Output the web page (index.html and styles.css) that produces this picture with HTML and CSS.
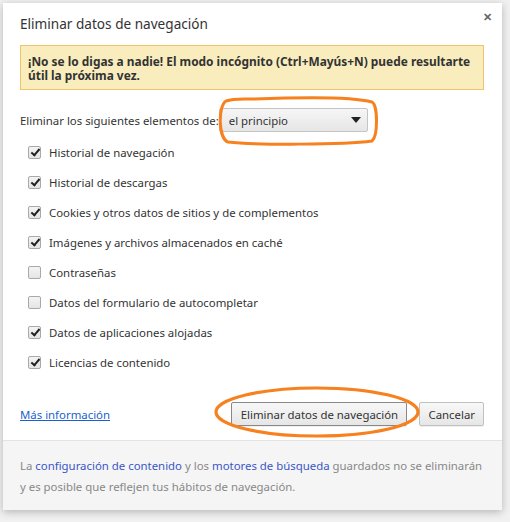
FILE: index.html
```html
<!DOCTYPE html>
<html lang="es">
<head>
<meta charset="utf-8">
<link rel="stylesheet" href="styles.css">
</head>
<body>
<div class="dialog">
  <div class="header">
    <h1 class="title">Eliminar datos de navegación</h1>
    <span class="close">✕</span>
  </div>
  <div class="content">
    <div class="banner">¡No se lo digas a nadie! El modo incógnito (Ctrl+Mayús+N) puede resultarte útil la próxima vez.</div>
    <div class="period-row">
      <span class="period-label">Eliminar los siguientes elementos de:</span>
      <div class="select">
        <span>el principio</span>
        <span class="arrow"></span>
      </div>
    </div>
    <ul class="items">
      <li class="item"><span class="cb on"></span>Historial de navegación</li>
      <li class="item"><span class="cb on"></span>Historial de descargas</li>
      <li class="item"><span class="cb on"></span>Cookies y otros datos de sitios y de complementos</li>
      <li class="item"><span class="cb on"></span>Imágenes y archivos almacenados en caché</li>
      <li class="item"><span class="cb"></span>Contraseñas</li>
      <li class="item"><span class="cb"></span>Datos del formulario de autocompletar</li>
      <li class="item"><span class="cb on"></span>Datos de aplicaciones alojadas</li>
      <li class="item"><span class="cb on"></span>Licencias de contenido</li>
    </ul>
    <div class="actions">
      <a class="more" href="#">Más información</a>
      <div class="buttons">
        <button class="btn primary">Eliminar datos de navegación</button>
        <button class="btn">Cancelar</button>
      </div>
    </div>
  </div>
  <div class="footer">
    <p class="note">La <a href="#">configuración de contenido</a> y los <a href="#">motores de búsqueda</a> guardados no se eliminarán y es posible que reflejen tus hábitos de navegación.</p>
  </div>
  <svg class="mark mark-select" width="166" height="50" viewBox="0 0 166 50">
    <path d="M40 3 C90 1 140 1 158 6 C164 9 164 40 158 45 C130 49 40 49 14 46 C4 42 4 10 12 5 C20 2 30 3 40 3 Z" fill="none" stroke="#f7811f" stroke-width="3"/>
  </svg>
  <svg class="mark mark-button" width="208" height="56" viewBox="0 0 208 56">
    <ellipse cx="104" cy="27" rx="101" ry="24" fill="none" stroke="#f7811f" stroke-width="3.2"/>
  </svg>
</div>
</body>
</html>
```

FILE: styles.css
```css
html, body {
  margin: 0;
  padding: 0;
}
body {
  background: #f1f1f1;
  font-family: "Noto Sans", "Open Sans", sans-serif;
  font-size: 11.4px;
  color: #333;
  width: 510px;
  height: 522px;
  overflow: hidden;
}
.dialog {
  position: relative;
  margin: 3px 0 0 3px;
  width: 499px;
  height: 507px;
  background: #fff;
  box-shadow: 0 2px 8px rgba(0,0,0,0.25);
  display: flex;
  flex-direction: column;
}
.header {
  position: relative;
  height: 42px;
  padding: 0 17px;
  box-sizing: border-box;
}
.title {
  margin: 0;
  font-weight: normal;
  font-size: 13.6px;
  line-height: 20px;
  padding-top: 11px;
  color: #333;
}
.close {
  position: absolute;
  right: 10px;
  top: 6px;
  font-size: 11px;
  font-weight: bold;
  color: #666;
}
.content {
  padding: 0 18px 0 17px;
  flex: 1;
}
.banner {
  background: #f9edbe;
  border: 1px solid #f0c36d;
  padding: 8px 8px 7px 7px;
  font-weight: bold;
  font-size: 11.9px;
  line-height: 14px;
  color: #333;
}
.period-row {
  display: flex;
  align-items: center;
  margin-top: 18px;
  height: 24px;
}
.select {
  width: 149px;
  height: 24px;
  box-sizing: border-box;
  border: 1px solid #c4c4c4;
  border-radius: 2px;
  background: linear-gradient(#f6f6f6, #e6e6e6);
  display: flex;
  align-items: center;
  justify-content: space-between;
  padding: 0 6px 0 9px;
}
.arrow {
  width: 0;
  height: 0;
  border-left: 5px solid transparent;
  border-right: 5px solid transparent;
  border-top: 6px solid #222;
}
.items {
  list-style: none;
  margin: 5px 0 0;
  padding: 0 0 0 8px;
}
.item {
  height: 30px;
  display: flex;
  align-items: center;
}
.cb {
  width: 13px;
  height: 13px;
  box-sizing: border-box;
  border: 1px solid #a9a9a9;
  border-radius: 2px;
  background: linear-gradient(#f4f4f4, #e4e4e4);
  margin-right: 8px;
  position: relative;
  flex: none;
}
.cb.on::after {
  content: "";
  position: absolute;
  left: 4px;
  top: 0px;
  width: 3px;
  height: 7px;
  border: solid #222;
  border-width: 0 2px 2px 0;
  transform: rotate(40deg);
}
.actions {
  display: flex;
  align-items: center;
  justify-content: space-between;
  margin-top: 25px;
  height: 24px;
}
.more {
  color: #1a5fd0;
  text-decoration: underline;
}
.buttons {
  display: flex;
  gap: 12px;
}
.btn {
  font-family: inherit;
  font-size: 11.4px;
  color: #333;
  height: 24px;
  padding: 0 8px;
  white-space: nowrap;
  border: 1px solid #c0c0c0;
  border-radius: 2px;
  background: linear-gradient(#f8f8f8, #e6e6e6);
  box-shadow: 0 1px 0 rgba(0,0,0,0.06);
}
.btn.primary {
  border-color: #888;
  width: 176px;
}
.footer {
  height: 70px;
  box-sizing: border-box;
  background: #f5f5f5;
  border-top: 1px solid #e3e3e3;
  padding: 14px 16px 0 17px;
  color: #888;
}
.note {
  margin: 0;
  line-height: 21px;
}
.note a {
  color: #3a56c8;
  text-decoration: none;
}
.mark {
  position: absolute;
  pointer-events: none;
}
.mark-select {
  left: 211px;
  top: 93px;
}
.mark-button {
  left: 210px;
  top: 382px;
}
```
